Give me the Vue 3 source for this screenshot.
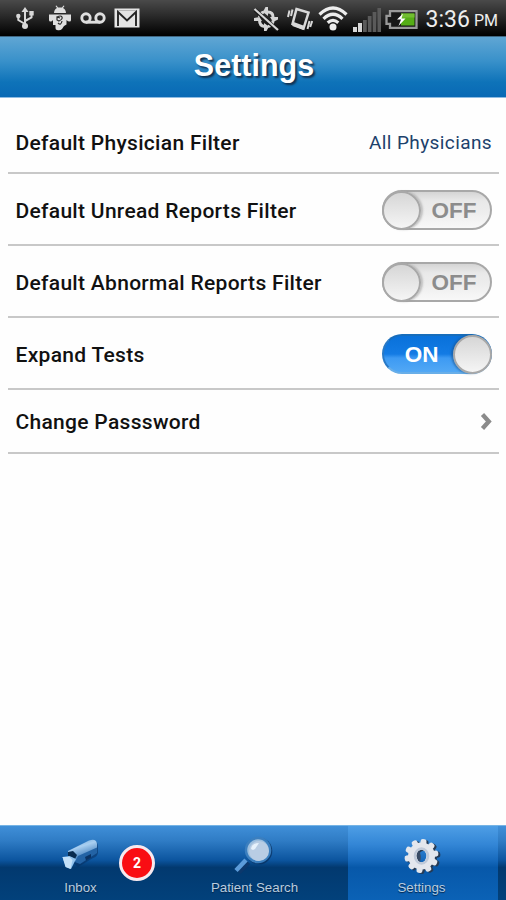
<script setup>
import { ref } from 'vue'

const rows = ref([
  { label: 'Default Physician Filter', type: 'value', value: 'All Physicians' },
  { label: 'Default Unread Reports Filter', type: 'toggle', on: false },
  { label: 'Default Abnormal Reports Filter', type: 'toggle', on: false },
  { label: 'Expand Tests', type: 'toggle', on: true },
  { label: 'Change Passsword', type: 'link' }
])

const teeth = Array.from({ length: 10 }, (_, i) => i * 36 + 8)
</script>

<template>
  <div class="screen">
    <div class="status">
      <div class="group left">
        <svg width="20" height="24" viewBox="0 0 20 24" fill="none" stroke="#d8d8d8" stroke-width="2">
          <path d="M10 4v15M10 18L3.300 14V10M10 15l6.500-3.500V8" />
          <path d="M10 1l3.500 5h-7z" fill="#d8d8d8" stroke="none" />
          <circle cx="10" cy="20" r="3" fill="#d8d8d8" stroke="none" />
          <circle cx="3.300" cy="10" r="2.200" fill="#d8d8d8" stroke="none" />
          <path d="M14.300 5h4.400v4.400h-4.400z" fill="#d8d8d8" stroke="none" />
        </svg>
        <svg width="24" height="26" viewBox="0 0 24 26">
          <g fill="#dedede">
            <path d="M6 8C6 5 8 3.500 9 3L7.500 1l1-.6L10 2.600h4L15.500.4l1 .6L15 3c1.500.7 3 2.500 3 5z" />
            <path d="M1 9.500h22v5.500q0 1.500-1.500 1.500T18.500 15v4.500L16 21l-2 3q-2 2-5 1-1.500 0-1.500-2v-3H5V15q-1 1.500-2.500 1.500T1 15z" />
          </g>
          <path d="M6 8.500h12M9 12q4-2 5 0t-3 4l-2-1v-3l3 1M10 18q3 3 4-2" fill="none" stroke="#292929" stroke-width="1.200" />
        </svg>
        <svg class="voicemail" width="26" height="14" viewBox="0 0 26 14" fill="none" stroke="#dedede" stroke-width="2.900">
          <circle cx="6" cy="7" r="4.200" /><circle cx="20" cy="7" r="4.200" /><path d="M6 11.200h14" />
        </svg>
        <svg width="26" height="20" viewBox="0 0 26 20">
          <rect x=".5" y=".5" width="25" height="19" fill="#e5e5e5" />
          <path d="M4 18V4l9 8.500L22 4v14" fill="none" stroke="#252525" stroke-width="1.900" />
          <path d="M4 2.500h18" stroke="#999" stroke-width=".6" />
        </svg>
      </div>
      <div class="group right">
        <svg class="sync" width="26" height="26" viewBox="0 0 26 26" fill="none" stroke="#d5d5d5" stroke-width="3">
          <path d="M6.500 11q0-4 4.500-5M15 6q5 0 5 5M6.500 14q0 6 5 6.500M15 20.500q5-1 5-6" />
          <path d="M12.500 1h2.500v9l-5-4zM13.500 25H11v-8l5 3.500zM1 12v3h8l-2.500-4zM25 13.500V11h-8l3 5z" fill="#d5d5d5" stroke="none" />
          <path d="M2 4l22.500 20" stroke="#191919" stroke-width="4" /><path d="M1.500 3L25 24" stroke-width="2.200" />
        </svg>
        <svg class="vibrate" width="26" height="26" viewBox="0 0 26 26" fill="none" stroke="#d8d8d8">
          <path d="M9.500 3L21.500 6.500 16.500 22.500 5.500 18z" stroke-width="2.500" /><path d="M6 18l11 4" stroke-width="4" />
          <path d="M5.500 3.500L4 10M2.500 4.500L1 11M22.500 15l-2 8M25.200 15l-2 6" stroke-width="2" />
        </svg>
        <svg class="wifi" width="30" height="25" viewBox="0 0 30 25" fill="none" stroke="#ededed" stroke-width="3.200">
          <path d="M1.500 8.500Q15-4.500 28.500 8.500M5.500 12.800Q15 3.700 24.500 12.800M9.700 16.800Q15 12 20.300 16.800" />
          <circle cx="15" cy="21" r="3.500" fill="#ededed" stroke="none" />
        </svg>
        <svg class="signal" width="28" height="24" viewBox="0 0 28 24" fill="#5a5a5a">
          <path d="M0 19h4v5H0zM5 15h4v9H5z" fill="#d8d8d8" />
          <path d="M10 12h3.800v12H10zM14.800 8h3.800v16h-3.800zM19.600 4h3.800v20h-3.800zM24.400 0h3.600v24h-3.600z" />
        </svg>
        <svg class="battery" width="33" height="19" viewBox="0 0 33 19">
          <path d="M5 1.200h26.500v16.600H5v-4H1.500v-8H5z" fill="#171717" stroke="#999" stroke-width="2.300" />
          <path d="M16 3.500h13.500v12H16z" fill="#55ad16" /><path d="M16 3.500h13.500v4H16z" fill="#72be30" />
          <path d="M18 3.500l-6 6h4L13.500 16l7-7.500h-4z" fill="#fff" />
        </svg>
        <span class="time">3:36</span><span class="pm">PM</span>
      </div>
    </div>

    <header class="header"><h1>Settings</h1></header>

    <main class="list">
      <div v-for="row in rows" :key="row.label" class="row" :class="row.type">
        <span class="label">{{ row.label }}</span>
        <span v-if="row.type === 'value'" class="val">{{ row.value }}</span>
        <button v-else-if="row.type === 'toggle'" class="switch" :class="{ on: row.on }" @click="row.on = !row.on">
          <span class="knob"></span>
          <span class="word">{{ row.on ? 'ON' : 'OFF' }}</span>
        </button>
        <svg v-else class="chevron" width="12" height="20" viewBox="0 0 12 20">
          <path d="M2.500 2.500L8.800 9.500l-6.300 7" fill="none" stroke="#8b8b8b" stroke-width="4.300" />
        </svg>
      </div>
    </main>

    <nav class="tabs">
      <div class="tab inbox">
        <svg width="42" height="40" viewBox="0 0 42 40">
          <defs>
            <linearGradient id="cam" x1="0" y1="0" x2=".4" y2="1">
              <stop offset="0" stop-color="#5d9bd6" /><stop offset=".4" stop-color="#a9cff1" /><stop offset="1" stop-color="#1d62aa" />
            </linearGradient>
          </defs>
          <path d="M11 17L31 6q7-2 7 5v6q-1 4-5 5l-15 9-6-5z" fill="#082f60" opacity=".55" />
          <path d="M8 15L29 4.500q7-2.500 8 3V16L18 27l-10-6z" fill="url(#cam)" />
          <path d="M18 20l19-8.500V17l-17 11-5-2z" fill="#2363a5" />
          <path d="M8 16l5-1 4 4-2 4-7-3z" fill="#092c50" />
          <path d="M2.500 21l7-1 6.500 3-5 10-5-2z" fill="#92c3ee" /><path d="M2.500 21l7 0 3 3-2 9-5-2z" fill="#c4e1f9" />
          <path d="M25 21l6-3v3.500l-5 3z" fill="#0a3263" />
        </svg>
        <span>Inbox</span>
        <b class="badge">2</b>
      </div>
      <div class="tab search">
        <svg width="42" height="40" viewBox="0 0 42 40">
          <path d="M14 26L4.500 36" stroke="#0c386c" stroke-width="6" />
          <path d="M12 24L2 34.500" stroke="#5b9bd9" stroke-width="4.500" />
          <circle cx="25" cy="15" r="13.300" fill="#082f5c" opacity=".7" />
          <circle cx="24" cy="14" r="12" fill="#9bbede" stroke="#3b7fbf" stroke-width="2.500" />
          <circle cx="25" cy="15" r="10" fill="#b9cde4" />
          <path d="M17 13q1-6 8-6l-4 6-2 1z" fill="#e7f2fc" />
        </svg>
        <span>Patient Search</span>
      </div>
      <div class="tab active">
        <svg width="42" height="40" viewBox="0 0 42 40">
          <defs>
            <mask id="hole"><rect width="42" height="40" fill="#fff" /><ellipse cx="20.500" cy="20" rx="4.800" ry="6.300" fill="#000" /></mask>
          </defs>
          <g v-for="layer in ['shadow', 'face']" :key="layer" :class="layer" mask="url(#hole)">
            <circle cx="20.500" cy="20" r="13.500" />
            <rect v-for="a in teeth" :key="a" x="17.500" y="3" width="6" height="10" rx="2.200" :transform="`rotate(${a} 20.500 20)`" />
          </g>
          <ellipse cx="20.500" cy="20" rx="6.500" ry="7.500" fill="none" stroke="#c0cad9" stroke-width="2.500" />
          <path d="M18 14.500q-5 5.500 1 11 2-5.500-1-11z" fill="#394c66" />
        </svg>
        <span>Settings</span>
      </div>
    </nav>
  </div>
</template>

<style>
body { margin: 0; background: #fff; }
</style>

<style scoped>
.screen { width: 506px; height: 900px; display: flex; flex-direction: column; background: #fefefe; overflow: hidden; font-family: Roboto, sans-serif; }
svg { display: block; flex: none; }
.status { height: 36px; flex: none; box-sizing: border-box; display: flex; justify-content: space-between; padding: 0 8px 0 15px; background: linear-gradient(#4a4a4a, #2d2d2d 40%, #0b0b0b 85%, #000); }
.group { display: flex; align-items: center; }
.left svg { margin-right: 8px; }
.left svg:first-child { margin-right: 13px; }
.sync { margin: 2px 8px 0 0; }
.vibrate { margin: 2px 5px 0 0; }
.wifi { margin: 1px 5px 0 0; }
.signal { margin: 4px 4px 0 0; }
.battery { margin: 3px 8px 0 0; }
.time { color: #eee; font-size: 23px; line-height: 38px; padding-top: 4px; }
.pm { color: #eee; font-size: 16px; line-height: 20px; margin-left: 4px; padding-top: 6px; }
.header { height: 62px; flex: none; box-sizing: border-box; display: flex; justify-content: center; align-items: center; border-top: 1px solid #416782; border-bottom: 1px solid #8dbbe2; background: linear-gradient(#60a6d4, #3991ca 40%, #0e73b9 75%, #0869b5); padding: 0 0 4px 2px; }
h1 { margin: 0; color: #fff; font: bold 30.5px/40px "Liberation Sans", sans-serif; text-shadow: 2px 2px 2px #123150; }
.list { flex: 1; padding: 14px 7px 0 8px; }
.row { height: 72px; box-sizing: border-box; display: flex; align-items: center; justify-content: space-between; border-bottom: 2px solid #c8c8c8; padding: 2px 7px 0 7.5px; }
.row.value { height: 62px; }
.row.link { height: 64px; }
.row.toggle .label { padding-top: 1px; }
.label { font-weight: 500; font-size: 21px; letter-spacing: .3px; color: #111; }
.val { color: #1c416b; font-size: 19px; letter-spacing: .4px; padding-bottom: 1px; }
.switch { width: 110px; height: 40px; box-sizing: border-box; padding: 0; border: 2px solid #a8a8a8; border-radius: 20px; background: linear-gradient(#d5d5d5, #e9e9e9 25%, #ededed 55%, #f8f8f8); display: flex; align-items: center; }
.knob { width: 39px; height: 39px; flex: none; margin-left: -2px; box-sizing: border-box; border: 2px solid #a8a8a8; border-radius: 50%; background: linear-gradient(#d6d6d6, #f5f5f5); box-shadow: 2px 0 2px #9998; }
.word { flex: 1; padding: 1px 3px 0 0; text-align: center; color: #8c8c8c; font: bold 22.5px/36px "Liberation Sans", sans-serif; }
.switch.on { flex-direction: row-reverse; border-color: #176dbb #2879c6 #68aee8; background: linear-gradient(#0870d9, #137be4 50%, #3d9af3 60%, #55aaf5) border-box; }
.on .knob { margin: 0 -2px 0 0; box-shadow: -2px 0 2px #1b528b88; }
.on .word { color: #fff; padding: 1px 0 0 6px; }
.tabs { height: 75px; flex: none; display: flex; border-top: 1px solid #76b4e5; box-sizing: border-box; background: linear-gradient(#408fd8, #2f7cc5 20%, #0c559f 46%, #02396f 56%, #02417b); }
.tab { box-sizing: border-box; display: flex; flex-direction: column; align-items: center; padding-top: 10px; position: relative; }
.inbox { width: 161px; }
.search { width: 187px; }
.active { width: 150px; padding-right: 3px; background: linear-gradient(#4e9ee5, #3386d6 25%, #176abd 46%, #0758a9 56%, #0b62b6); }
.tab span { margin-top: 4px; color: #b9ccdf; font: 13.3px/15px "Liberation Sans", sans-serif; text-shadow: 0 1px 1px #03244a; }
.badge { position: absolute; left: 119px; top: 19px; width: 36px; height: 36px; box-sizing: border-box; border: 3px solid #f7e9ef; border-radius: 50%; background: #f90d13; color: #fff; text-align: center; font: bold 14px/30px Roboto, sans-serif; }
.shadow { fill: #253b56; transform: translate(2px, 1px); }
.face { fill: #e4e7ed; }
</style>
